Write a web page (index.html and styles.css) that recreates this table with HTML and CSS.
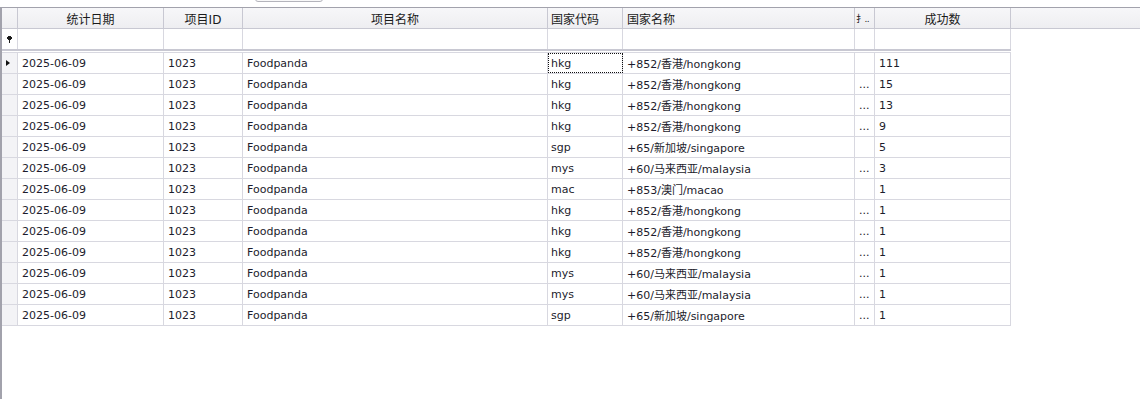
FILE: index.html
```html
<!DOCTYPE html>
<html>
<head>
<meta charset="utf-8">
<link rel="stylesheet" href="styles.css">
</head>
<body>
<div class="top"><div class="btn"></div></div>
<div class="grid">
  <div class="hdr">
    <div class="c ind"></div>
    <div class="c date center">统计日期</div>
    <div class="c id center">项目ID</div>
    <div class="c name center">项目名称</div>
    <div class="c code">国家代码</div>
    <div class="c cname">国家名称</div>
    <div class="c trunc"><span class="tg">扌..</span></div>
    <div class="c cnt center">成功数</div>
    <div class="fill"></div>
  </div>
  <div class="filter">
    <div class="c ind"><svg class="pin" width="5" height="7" viewBox="0 0 5 7"><path d="M1 0h3v1h1v2h-1v1h-1v3h-1v-3h-1v-1h-1v-2h1z" fill="#1a1a1a"/></svg></div>
    <div class="c date"></div>
    <div class="c id"></div>
    <div class="c name"></div>
    <div class="c code"></div>
    <div class="c cname"></div>
    <div class="c trunc"></div>
    <div class="c cnt"></div>
  </div>
  <div class="sep"></div>
  <div class="rows">
    <div class="row"><div class="c ind"><span class="arrow"></span></div><div class="c date">2025-06-09</div><div class="c id">1023</div><div class="c name">Foodpanda</div><div class="c code focus">hkg</div><div class="c cname">+852/香港/hongkong</div><div class="c trunc"></div><div class="c cnt">111</div></div>
    <div class="row"><div class="c ind"></div><div class="c date">2025-06-09</div><div class="c id">1023</div><div class="c name">Foodpanda</div><div class="c code">hkg</div><div class="c cname">+852/香港/hongkong</div><div class="c trunc">...</div><div class="c cnt">15</div></div>
    <div class="row"><div class="c ind"></div><div class="c date">2025-06-09</div><div class="c id">1023</div><div class="c name">Foodpanda</div><div class="c code">hkg</div><div class="c cname">+852/香港/hongkong</div><div class="c trunc">...</div><div class="c cnt">13</div></div>
    <div class="row"><div class="c ind"></div><div class="c date">2025-06-09</div><div class="c id">1023</div><div class="c name">Foodpanda</div><div class="c code">hkg</div><div class="c cname">+852/香港/hongkong</div><div class="c trunc">...</div><div class="c cnt">9</div></div>
    <div class="row"><div class="c ind"></div><div class="c date">2025-06-09</div><div class="c id">1023</div><div class="c name">Foodpanda</div><div class="c code">sgp</div><div class="c cname">+65/新加坡/singapore</div><div class="c trunc"></div><div class="c cnt">5</div></div>
    <div class="row"><div class="c ind"></div><div class="c date">2025-06-09</div><div class="c id">1023</div><div class="c name">Foodpanda</div><div class="c code">mys</div><div class="c cname">+60/马来西亚/malaysia</div><div class="c trunc">...</div><div class="c cnt">3</div></div>
    <div class="row"><div class="c ind"></div><div class="c date">2025-06-09</div><div class="c id">1023</div><div class="c name">Foodpanda</div><div class="c code">mac</div><div class="c cname">+853/澳门/macao</div><div class="c trunc"></div><div class="c cnt">1</div></div>
    <div class="row"><div class="c ind"></div><div class="c date">2025-06-09</div><div class="c id">1023</div><div class="c name">Foodpanda</div><div class="c code">hkg</div><div class="c cname">+852/香港/hongkong</div><div class="c trunc">...</div><div class="c cnt">1</div></div>
    <div class="row"><div class="c ind"></div><div class="c date">2025-06-09</div><div class="c id">1023</div><div class="c name">Foodpanda</div><div class="c code">hkg</div><div class="c cname">+852/香港/hongkong</div><div class="c trunc">...</div><div class="c cnt">1</div></div>
    <div class="row"><div class="c ind"></div><div class="c date">2025-06-09</div><div class="c id">1023</div><div class="c name">Foodpanda</div><div class="c code">hkg</div><div class="c cname">+852/香港/hongkong</div><div class="c trunc">...</div><div class="c cnt">1</div></div>
    <div class="row"><div class="c ind"></div><div class="c date">2025-06-09</div><div class="c id">1023</div><div class="c name">Foodpanda</div><div class="c code">mys</div><div class="c cname">+60/马来西亚/malaysia</div><div class="c trunc">...</div><div class="c cnt">1</div></div>
    <div class="row"><div class="c ind"></div><div class="c date">2025-06-09</div><div class="c id">1023</div><div class="c name">Foodpanda</div><div class="c code">mys</div><div class="c cname">+60/马来西亚/malaysia</div><div class="c trunc">...</div><div class="c cnt">1</div></div>
    <div class="row"><div class="c ind"></div><div class="c date">2025-06-09</div><div class="c id">1023</div><div class="c name">Foodpanda</div><div class="c code">sgp</div><div class="c cname">+65/新加坡/singapore</div><div class="c trunc">...</div><div class="c cnt">1</div></div>
  </div>
</div>
</body>
</html>
```

FILE: styles.css
```css
html, body {
  margin: 0;
  padding: 0;
  background: #ffffff;
  height: 100%;
  overflow: hidden;
}
body {
  font-family: "DejaVu Sans", "Noto Sans CJK SC", sans-serif;
  font-size: 11px;
  color: #1c1c2c;
}
.top {
  height: 7px;
  position: relative;
}
.btn {
  position: absolute;
  left: 255px;
  top: -6px;
  width: 66px;
  height: 6px;
  border: 1px solid #b4b4bc;
  border-radius: 3px;
  background: #f8f8f8;
}
.grid {
  border-top: 1px solid #a2a2ac;
  border-left: 2px solid #a2a2ac;
  height: 391px;
}
.hdr {
  display: flex;
  height: 20px;
  border-bottom: 1px solid #c8c8d2;
  background: linear-gradient(#f7f7f9, #eeeef1);
  color: #1a1a1a;
  font-size: 12px;
}
.hdr .c {
  border-right: 1px solid #c8c8d2;
}
.fill {
  flex: 1;
}
.filter, .row {
  display: flex;
  width: 1009px;
}
.filter {
  height: 20px;
}
.c {
  box-sizing: border-box;
  border-right: 1px solid #d8d8e0;
  display: flex;
  align-items: center;
  padding-left: 4px;
  white-space: nowrap;
  overflow: hidden;
  height: 100%;
}
.center {
  justify-content: center;
  padding-left: 0;
}
.ind { width: 16px; padding-left: 0; justify-content: center; }
.date { width: 146px; }
.id { width: 79px; }
.name { width: 305px; }
.code { width: 75px; padding-left: 3px; }
.cname { width: 232px; }
.trunc { width: 20px; }
.cnt { width: 136px; }
.hdr .trunc { padding-left: 1px; }
.tg { font-size: 9px; letter-spacing: -0.5px; }
.sep {
  width: 1009px;
  border-top: 2px solid #c8c8d2;
  height: 1px;
  border-bottom: 1px solid #d8d8e0;
}
.row {
  height: 21px;
  border-bottom: 1px solid #d8d8e0;
  box-sizing: border-box;
}
.row .ind {
  background: #f3f3f6;
}
.pin { display: block; }
.arrow {
  width: 0;
  height: 0;
  border-left: 4px solid #111;
  border-top: 3px solid transparent;
  border-bottom: 3px solid transparent;
  margin-left: -3px;
}
.focus {
  outline: 1px dotted #111;
  outline-offset: -1px;
}
```
